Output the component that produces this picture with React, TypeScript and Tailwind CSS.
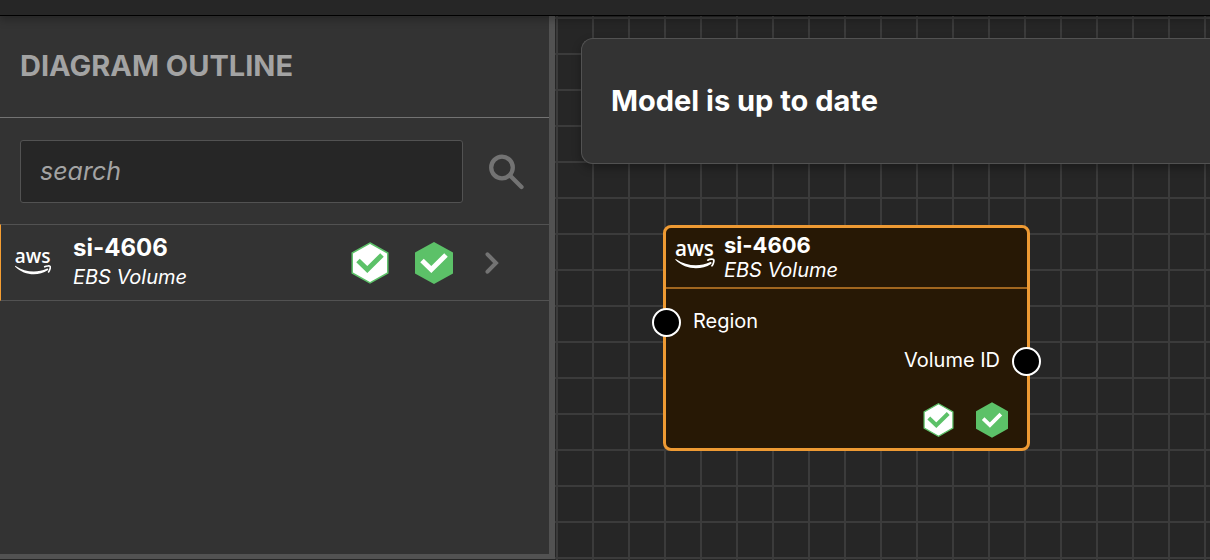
import React from "react";

function AwsLogo({ className }: { className: string }) {
  return (
    <svg viewBox="0 -10 36 44" className={className} role="img" aria-label="aws" fill="none">
      <text x="17.5" y="12" textAnchor="middle" fill="#fff" className="font-['Open_Sans',sans-serif] text-[19px] font-semibold">
        aws
      </text>
      <path d="M0.700 14.900 C10 21.200 22 22.100 31.600 17.700 C33 17.100 33.900 18.400 32.700 19.300 C23 25.500 9 24.500 0.200 15.700 C-0.200 15.200 0.200 14.600 0.700 14.900 Z" fill="#fff" />
      <path d="M29.700 15.800 C31.500 14.700 34.600 14.700 35.100 15.400 C35.600 16.200 35 19.200 33.600 20.900" stroke="#fff" strokeWidth="1.600" strokeLinecap="round" />
    </svg>
  );
}

function HexCheck({ variant, className }: { variant: "outline" | "solid" | "compact"; className: string }) {
  const outline = variant === "outline";
  return (
    <svg viewBox="0 0 38 42" className={className} aria-hidden="true" fill="none">
      <path
        d={outline ? "M19 1 L36.800 11 V31 L19 41 L1.200 31 V11 Z" : "M19 0 L38 10.500 V31.500 L19 42 L0 31.500 V10.500 Z"}
        fill={outline ? "#fff" : "#5cc168"}
        stroke={outline ? "#5cc168" : "none"}
        strokeWidth="1.500"
      />
      <path
        d={variant === "compact" ? "M8.500 19.500 L16.500 27 L29.500 14" : "M7 18.500 L16.300 27.500 L31 13"}
        stroke={outline ? "#5cc168" : "#fff"}
        strokeWidth={variant === "compact" ? "4.500" : "5"}
      />
    </svg>
  );
}

function Sidebar() {
  return (
    <aside className="flex w-[555px] shrink-0 flex-col border-r-6 border-b-5 border-[#525252] bg-[#333333]">
      <div className="border-b border-[#737373] px-5 pt-[30px] pb-[31px]">
        <h2 className="text-[29px] leading-10 font-bold text-[#a3a3a3]">DIAGRAM OUTLINE</h2>
      </div>
      <form className="flex items-center px-5 pt-[22px] pb-[21px]" onSubmit={(e) => e.preventDefault()}>
        <input
          type="search"
          aria-label="Search components"
          placeholder="search"
          className="h-[63px] w-[443px] rounded-[3px] border border-[#525252] bg-[#262626] px-[19px] pb-0.5 text-[25px] text-white italic outline-none placeholder:text-[#a3a3a3]"
        />
        <button type="submit" aria-label="Search" className="ml-[26px]">
          <svg viewBox="0 0 36 36" className="size-9" fill="none" stroke="#737373" strokeLinecap="round">
            <circle cx="13" cy="13.500" r="10.800" strokeWidth="4.300" />
            <path d="M21.500 22 L32.500 33" strokeWidth="4.300" />
          </svg>
        </button>
      </form>
      <a href="#si-4606" className="flex h-[77px] items-center border-y border-l border-y-[#525252] border-l-[#f59e32] pl-3.5">
        <AwsLogo className="h-11 w-9" />
        <span className="ml-[22px] flex flex-1 flex-col pb-0.5 text-white">
          <strong className="text-[24px] leading-[30px] font-bold">si-4606</strong>
          <em className="text-[20px] leading-7">EBS Volume</em>
        </span>
        <span className="mr-[50px] flex items-center">
          <HexCheck variant="outline" className="h-[42px] w-[38px]" />
          <HexCheck variant="solid" className="ml-[26px] h-[42px] w-[38px]" />
          <svg viewBox="0 0 14 24" className="ml-8 h-6 w-3.5" fill="none" stroke="#737373" strokeWidth="4" strokeLinecap="round">
            <path d="M2.500 3.300 L11 12 L2.500 20.700" strokeLinejoin="miter" />
          </svg>
        </span>
      </a>
    </aside>
  );
}

function Socket({ className }: { className: string }) {
  return <span className={`absolute top-px size-[29px] rounded-full border-2 border-white bg-black ${className}`} />;
}

function ComponentNode() {
  return (
    <article
      id="si-4606"
      className="absolute top-[209px] left-[108px] w-[367px] rounded-lg border-3 border-[#ee9a33] bg-[#271805] text-white"
    >
      <header className="flex h-[61px] items-center border-b-2 border-[#a1661f] pl-[9px]">
        <AwsLogo className="mb-1 h-12 w-10" />
        <div className="ml-[9px] flex flex-col pb-px">
          <strong className="text-[22px] leading-[26px] font-bold">si-4606</strong>
          <em className="text-[20px] leading-6">EBS Volume</em>
        </div>
      </header>
      <div className="relative mt-[18px] pl-[27px] text-[20px] leading-7">
        <Socket className="-left-[14px]" />
        Region
      </div>
      <div className="relative mt-[11px] pr-[27px] text-right text-[20px] leading-7">
        Volume ID
        <Socket className="-right-[14px]" />
      </div>
      <div className="mt-7 mr-[19px] mb-2.5 flex items-center justify-end gap-[22px]">
        <HexCheck variant="outline" className="h-[34px] w-[31px]" />
        <HexCheck variant="compact" className="h-9 w-8" />
      </div>
    </article>
  );
}

export default function App() {
  return (
    <div className="flex min-h-screen flex-col bg-[#262626] font-[Inter,sans-serif]">
      <header className="relative z-10 h-4 border-b border-black bg-[#262626] shadow-[0_4px_8px_rgba(0,0,0,0.25)]" />
      <div className="flex flex-1 pb-px">
        <Sidebar />
        <main className="relative -mb-px min-w-0 flex-1 overflow-hidden bg-[linear-gradient(to_right,#3b3b3b_2px,transparent_2px),linear-gradient(to_bottom,#3b3b3b_2px,transparent_2px)] bg-size-[36px_36px] bg-position-[1px_1px]">
          <section className="mt-[22px] ml-[26px] rounded-l-xl border border-r-0 border-[#525252] bg-[#333333] px-[29px] py-[42px] shadow-[0_4px_10px_rgba(0,0,0,0.3)]">
            <p className="text-[29px] leading-10 font-bold text-white">Model is up to date</p>
          </section>
          <ComponentNode />
        </main>
      </div>
    </div>
  );
}
